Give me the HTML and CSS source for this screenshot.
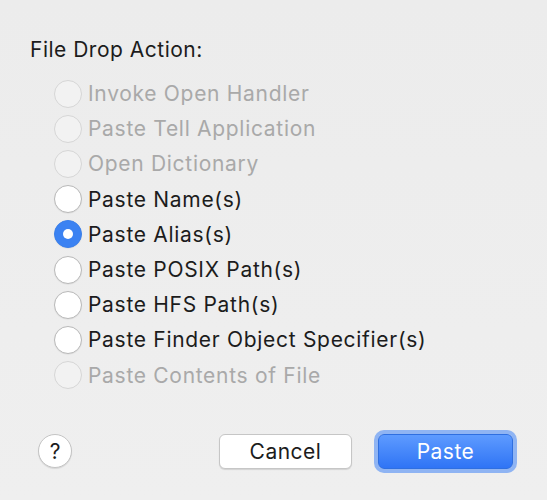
FILE: index.html
```html
<!DOCTYPE html>
<html>
<head>
<meta charset="utf-8">
<link rel="stylesheet" href="styles.css">
</head>
<body>
<div class="dialog">
  <div class="title">File Drop Action:</div>
  <div class="options">
    <div class="opt disabled"><span class="radio"></span><span class="label">Invoke Open Handler</span></div>
    <div class="opt disabled"><span class="radio"></span><span class="label">Paste Tell Application</span></div>
    <div class="opt disabled"><span class="radio"></span><span class="label">Open Dictionary</span></div>
    <div class="opt"><span class="radio"></span><span class="label">Paste Name(s)</span></div>
    <div class="opt checked"><span class="radio"></span><span class="label">Paste Alias(s)</span></div>
    <div class="opt"><span class="radio"></span><span class="label">Paste POSIX Path(s)</span></div>
    <div class="opt"><span class="radio"></span><span class="label">Paste HFS Path(s)</span></div>
    <div class="opt"><span class="radio"></span><span class="label">Paste Finder Object Specifier(s)</span></div>
    <div class="opt disabled"><span class="radio"></span><span class="label">Paste Contents of File</span></div>
  </div>
  <div class="footer">
    <button class="help">?</button>
    <div class="spacer"></div>
    <button class="btn cancel">Cancel</button>
    <button class="btn primary">Paste</button>
  </div>
</div>
</body>
</html>
```
FILE: styles.css
```css
html, body {
  margin: 0;
  padding: 0;
}
body {
  width: 547px;
  height: 500px;
  background: linear-gradient(#ececec, #efefef);
  font-family: Inter, "Liberation Sans", Arial, sans-serif;
  color: #1c1c1c;
  overflow: hidden;
}
.dialog {
  padding: 36px 0 0 30px;
  box-sizing: border-box;
  height: 500px;
  display: flex;
  flex-direction: column;
}
.title {
  font-size: 21px;
  letter-spacing: 0.5px;
  line-height: 28px;
  height: 28px;
}
.options {
  margin-top: 12px;
  margin-left: 24px;
  display: flex;
  flex-direction: column;
}
.opt {
  display: flex;
  align-items: center;
  height: 35.2px;
  font-size: 21px;
  letter-spacing: 0.7px;
}
.radio {
  width: 26px;
  height: 26px;
  border-radius: 50%;
  border: 1px solid #b9b9b9;
  background: #ffffff;
  box-sizing: content-box;
  margin-right: 6px;
  position: relative;
  flex: none;
  box-shadow: 0 0.5px 1px rgba(0,0,0,0.08);
}
.opt.disabled .radio {
  border-color: #d6d6d6;
  background: #f2f2f2;
  box-shadow: none;
}
.opt.disabled .label {
  color: #a9a9a9;
}
.opt.checked .radio {
  border-color: #3a7fea;
  background: #3b82f2;
}
.opt.checked .radio::after {
  content: "";
  position: absolute;
  left: 50%;
  top: 50%;
  width: 10px;
  height: 10px;
  margin: -5px 0 0 -5px;
  border-radius: 50%;
  background: #ffffff;
}
.footer {
  display: flex;
  align-items: center;
  margin-top: 41px;
  padding-left: 8px;
  padding-right: 34px;
}
.spacer {
  flex: 1;
}
button {
  font-family: Inter, "Liberation Sans", Arial, sans-serif;
}
.help {
  width: 34px;
  height: 34px;
  border-radius: 50%;
  border: 1px solid #c4c4c4;
  background: #ffffff;
  font-size: 21px;
  color: #1c1c1c;
  padding: 0;
  box-shadow: 0 1px 1px rgba(0,0,0,0.1);
}
.btn {
  height: 35px;
  border-radius: 6px;
  font-size: 21px;
  letter-spacing: 0.5px;
  padding: 0;
}
.cancel {
  width: 133px;
  border: 1px solid #c6c6c6;
  background: #ffffff;
  color: #1c1c1c;
  box-shadow: 0 1px 1px rgba(0,0,0,0.12);
}
.primary {
  width: 135px;
  margin-left: 26px;
  border: 1px solid #2f6fe0;
  background: linear-gradient(#5e9bff, #2f74f5);
  color: #ffffff;
  box-shadow: 0 0 0 4px #8fb4f3;
}
```
